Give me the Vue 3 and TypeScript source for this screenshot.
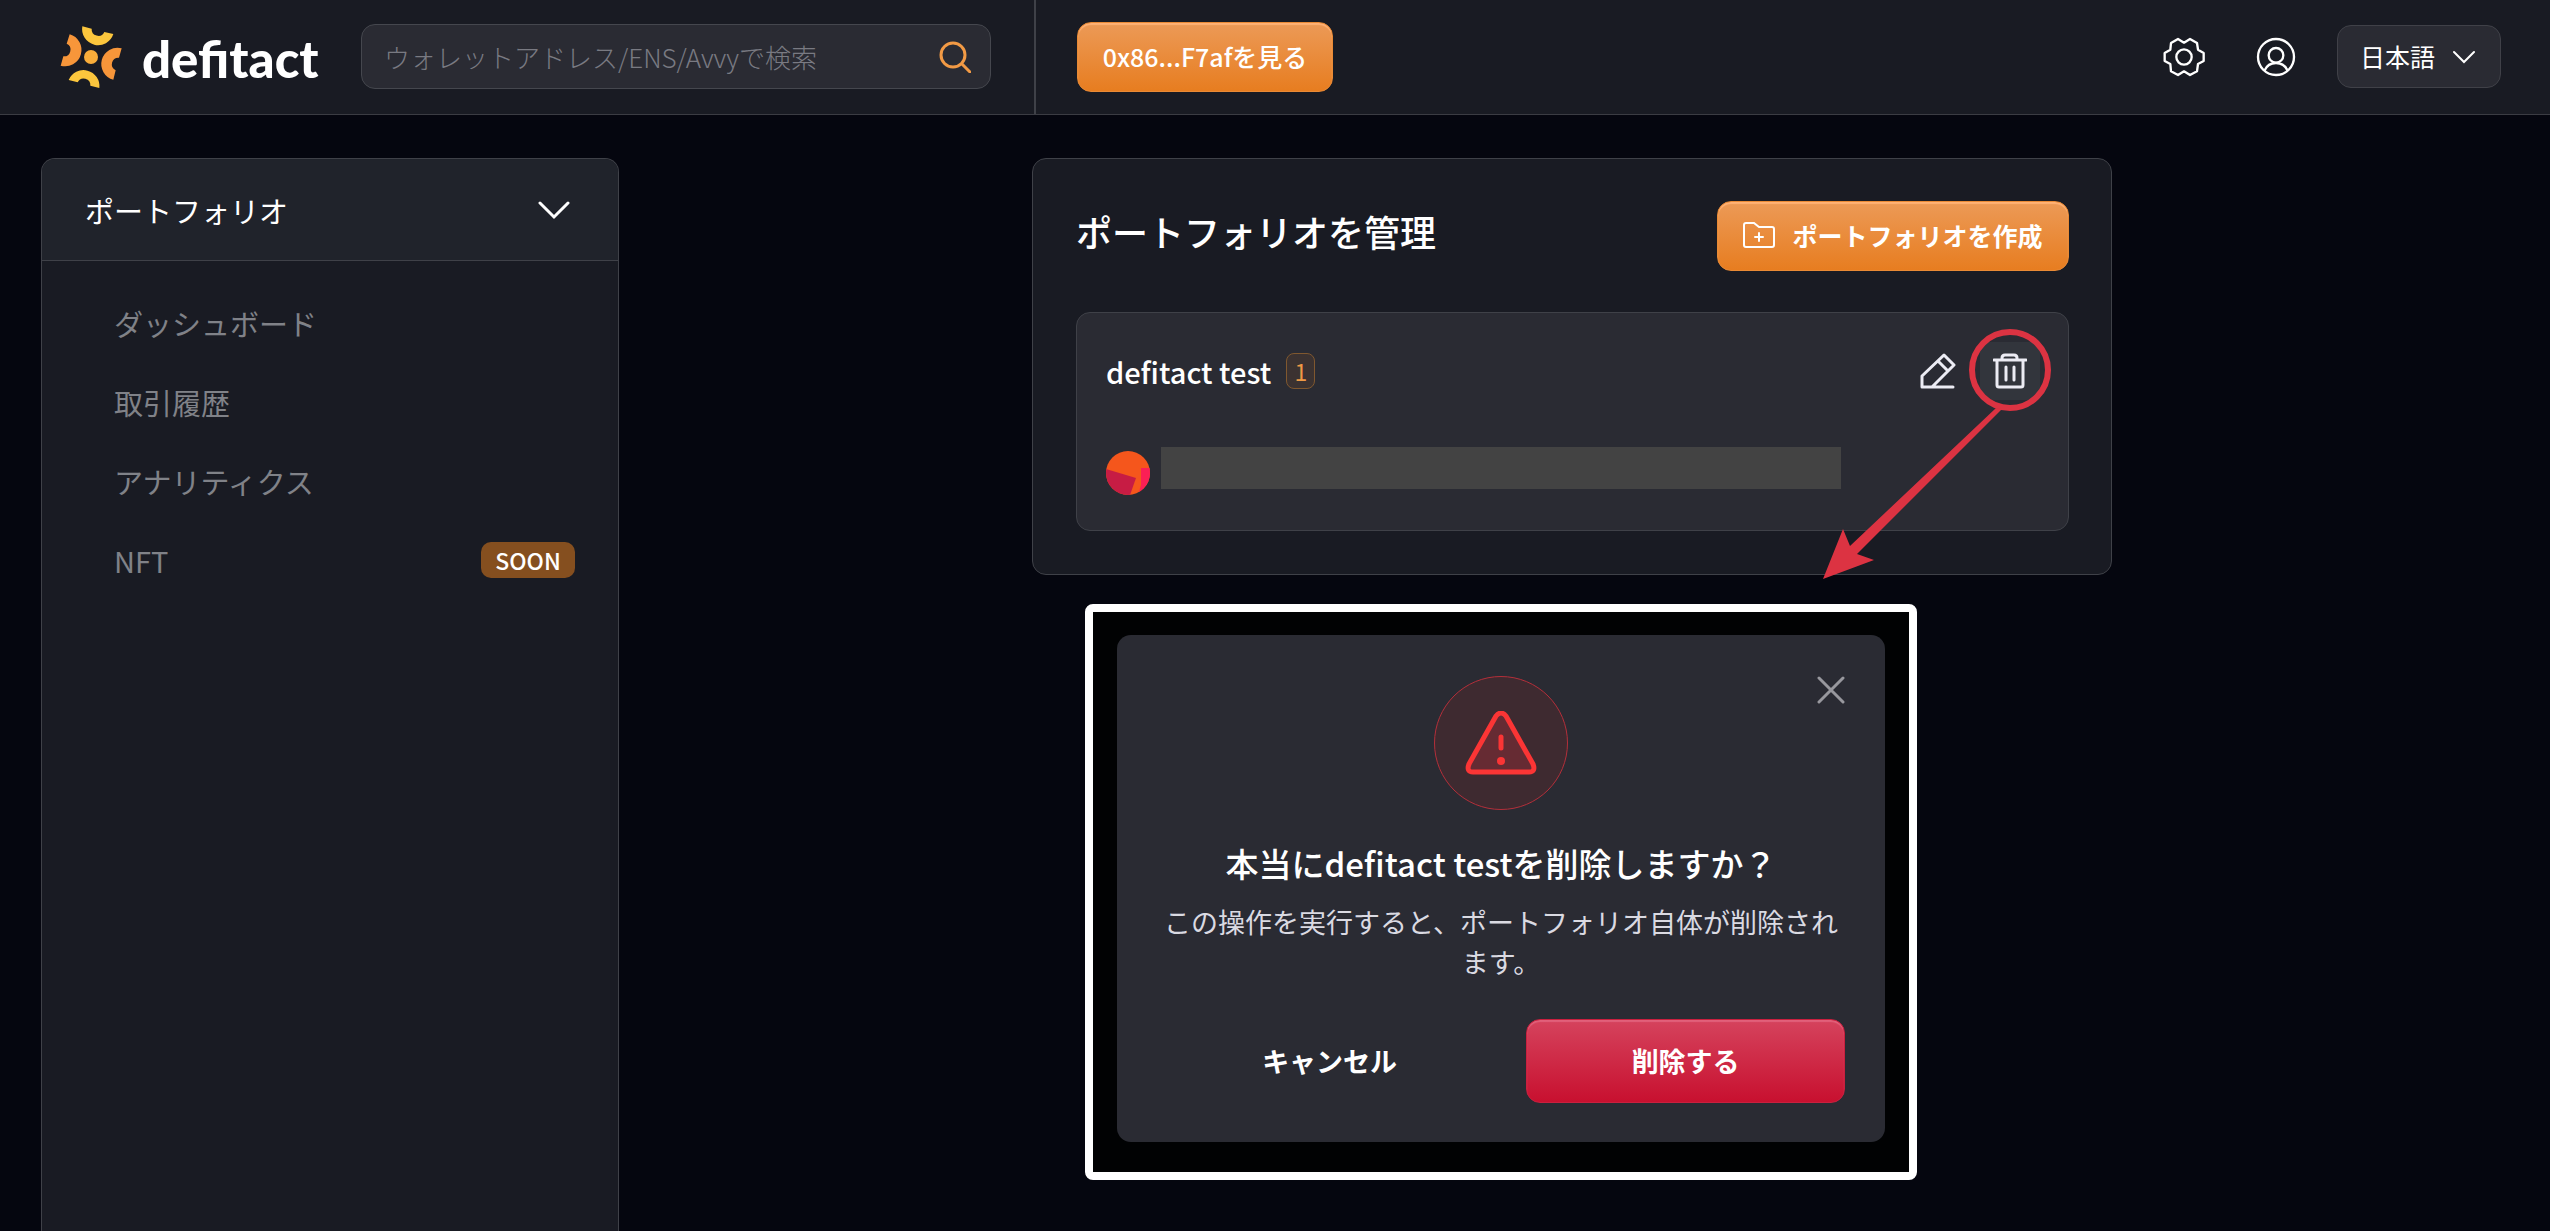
<script setup lang="ts">
import { ref } from 'vue'

interface MenuItem {
  label: string
  soon?: boolean
}

const menu: MenuItem[] = [
  { label: 'ダッシュボード' },
  { label: '取引履歴' },
  { label: 'アナリティクス' },
  { label: 'NFT', soon: true },
]

const portfolio = { name: 'defitact test', wallets: 1 }
const query = ref('')
const language = ref('ja')
</script>

<template>
  <div class="page">
    <header class="topbar">
      <div class="topbar-left">
        <a class="brand" href="#" aria-label="defitact">
          <svg class="brand-mark" viewBox="30 33 186 186" aria-hidden="true">
            <g fill="#fbc63d">
              <path d="M97 34A48 48 0 0 0 190 57L163 51A20 20 0 0 1 125 41Z" />
              <path d="M56 195A48 48 0 0 1 148 219L121 212A20 20 0 0 0 83 202Z" />
            </g>
            <g fill="#f7963a">
              <path d="M59 58A48 48 0 0 1 32 152L40 124A20 20 0 0 0 50 86Z" />
              <path d="M215 100A48 48 0 0 0 190 194L197 166A20 20 0 0 1 207 128Z" />
            </g>
            <circle cx="123" cy="126" r="21" fill="#f9ad3a" />
          </svg>
          <span class="brand-name">defitact</span>
        </a>
        <form class="search" role="search" @submit.prevent>
          <input
            v-model="query"
            type="text"
            aria-label="検索"
            placeholder="ウォレットアドレス/ENS/Avvyで検索"
          />
          <button type="submit" aria-label="検索する">
            <svg width="32" height="32" viewBox="0 0 32 32" aria-hidden="true">
              <circle cx="14" cy="14" r="12" />
              <path d="M23 23L31 31" />
            </svg>
          </button>
        </form>
      </div>
      <div class="topbar-right">
        <button class="btn btn-orange view-btn" type="button">0x86...F7afを見る</button>
        <div class="tools">
          <button class="icon-btn" type="button" aria-label="設定">
            <svg width="42" height="40" viewBox="190 109 126 120" aria-hidden="true">
              <path
                d="M253 126L271 115L292 127L295 147L312 157V181L295 190L292 212L271 223L253 212L235 223L214 212L212 190L195 181V157L212 147L214 127L235 115Z"
              />
              <circle cx="253" cy="169" r="23" />
            </svg>
          </button>
          <button class="icon-btn" type="button" aria-label="アカウント">
            <svg width="40" height="40" viewBox="469 109 120 120" aria-hidden="true">
              <circle cx="529" cy="169" r="54" />
              <circle cx="529" cy="164" r="22" />
              <path d="M494 210C501 195 513 187 529 187S557 195 564 210" />
            </svg>
          </button>
          <div class="language">
            <select v-model="language" aria-label="言語">
              <option value="ja">日本語</option>
              <option value="en">English</option>
            </select>
            <svg width="22" height="14" viewBox="0 0 22 14" aria-hidden="true">
              <path d="M1 2L11 12L21 2" />
            </svg>
          </div>
        </div>
      </div>
    </header>

    <div class="layout">
      <aside class="sidebar">
        <button class="sidebar-head" type="button" aria-expanded="true">
          <span>ポートフォリオ</span>
          <svg width="32" height="20" viewBox="0 0 32 20" aria-hidden="true">
            <path d="M2 3L16 17L30 3" />
          </svg>
        </button>
        <nav class="menu">
          <a v-for="item in menu" :key="item.label" href="#">
            <span>{{ item.label }}</span>
            <span v-if="item.soon" class="soon">SOON</span>
          </a>
        </nav>
      </aside>

      <main class="content">
        <section class="panel">
          <div class="panel-head">
            <h1>ポートフォリオを管理</h1>
            <button class="btn btn-orange create-btn" type="button">
              <svg width="32" height="26" viewBox="0 0 32 26" aria-hidden="true">
                <path d="M3 1H11L16 5H29Q31 5 31 7V23Q31 25 29 25H3Q1 25 1 23V3Q1 1 3 1Z" />
                <path d="M16 11V19M12 15H20" />
              </svg>
              <span>ポートフォリオを作成</span>
            </button>
          </div>

          <article class="card">
            <div class="card-head">
              <h2>{{ portfolio.name }}</h2>
              <span class="count">{{ portfolio.wallets }}</span>
              <div class="card-actions">
                <button type="button" aria-label="編集">
                  <svg width="36" height="36" viewBox="0 0 36 36" aria-hidden="true">
                    <path d="M2 34V23L24 2L34 12L12 34M2 34H33M18 8L28 18" />
                  </svg>
                </button>
                <button class="active" type="button" aria-label="削除">
                  <svg width="34" height="36" viewBox="0 0 34 36" aria-hidden="true">
                    <path d="M1 7H33M9 7V5Q9 2 12 2H21Q24 2 24 5V7M4 7V32Q4 34 6 34H28Q30 34 30 32V7M13 14V27M21 14V27" />
                  </svg>
                </button>
              </div>
            </div>
            <div class="wallet">
              <svg class="avatar" width="44" height="44" viewBox="0 0 44 44" aria-hidden="true">
                <clipPath id="avatar-clip"><circle cx="22" cy="22" r="22" /></clipPath>
                <g clip-path="url(#avatar-clip)">
                  <rect width="44" height="44" fill="#f5561c" />
                  <path d="M35 17H44V44H32L35 34Z" fill="#fb1f55" />
                  <path d="M0 18L30 27L24 44H0Z" fill="#c71c44" />
                </g>
              </svg>
              <div class="redacted"></div>
            </div>

            <svg class="pointer" width="234" height="254" viewBox="0 0 234 254" aria-hidden="true">
              <circle cx="190" cy="42" r="38" />
              <path d="M176 80L182 81L37 226L54 232L3 251L23 201L30 218Z" />
            </svg>
          </article>
        </section>

        <div class="preview">
          <section class="modal" role="alertdialog" aria-labelledby="modal-title" aria-describedby="modal-text">
            <button class="close" type="button" aria-label="閉じる">
              <svg width="28" height="28" viewBox="0 0 28 28" aria-hidden="true">
                <path d="M2 2L26 26M26 2L2 26" />
              </svg>
            </button>
            <div class="warning">
              <svg width="72" height="64" viewBox="0 0 72 64" aria-hidden="true">
                <path
                  d="M31 5Q36 -1 41 5L68 53Q71 61 64 61H8Q1 61 4 53Z"
                  fill="#662b33"
                  stroke="#fb3535"
                  stroke-width="5"
                  stroke-linejoin="round"
                />
                <path d="M36 26V37" stroke="#fb3535" stroke-width="5" stroke-linecap="round" />
                <circle cx="36" cy="50" r="4" fill="#fb3535" />
              </svg>
            </div>
            <h2 id="modal-title">本当に{{ portfolio.name }}を削除しますか？</h2>
            <p id="modal-text">この操作を実行すると、ポートフォリオ自体が削除されます。</p>
            <div class="modal-actions">
              <button class="btn cancel" type="button">キャンセル</button>
              <button class="btn btn-red" type="button">削除する</button>
            </div>
          </section>
        </div>
      </main>
    </div>
  </div>
</template>

<style>
body {
  margin: 0;
  background: #05060f;
}
</style>

<style scoped>
* {
  box-sizing: border-box;
}

.page {
  min-height: 100vh;
  display: flex;
  flex-direction: column;
  background: #05060f;
  color: #fff;
  font-family: "Noto Sans CJK JP", "Noto Sans", sans-serif;
  font-size: 25px;
}

button,
input,
select {
  font: inherit;
  color: inherit;
  border: 0;
  margin: 0;
  padding: 0;
  background: none;
}

button {
  cursor: pointer;
}

svg {
  display: block;
  flex: none;
  fill: none;
}

h1,
h2,
p {
  margin: 0;
}

/* top bar */
.topbar {
  display: flex;
  height: 115px;
  background: #191b23;
  border-bottom: 1px solid #3b3c43;
}

.topbar-left {
  display: flex;
  align-items: center;
  width: 1036px;
  padding: 0 43px 1px 60px;
  border-right: 2px solid #3f4148;
}

.brand {
  display: flex;
  align-items: center;
  gap: 20px;
  width: 301px;
  color: #fff;
  text-decoration: none;
}

.brand-mark {
  width: 62px;
  height: 62px;
}

.brand-name {
  padding-top: 4px;
  font: 900 51px/60px Lato, sans-serif;
}

.search {
  flex: 1;
  display: flex;
  align-items: center;
  height: 65px;
  padding: 0 19px 0 22px;
  background: #2a2b33;
  border: 1px solid #45474e;
  border-radius: 14px;
}

.search input {
  flex: 1;
  min-width: 0;
  font-size: 26px;
  font-weight: 300;
  outline: none;
}

.search input::placeholder {
  color: #797a82;
  opacity: 1;
}

.search svg {
  stroke: #f29a45;
  stroke-width: 3;
  stroke-linecap: round;
}

.topbar-right {
  flex: 1;
  display: flex;
  align-items: center;
  justify-content: space-between;
  padding: 0 49px 1px 41px;
}

.tools {
  display: flex;
  align-items: center;
}

.icon-btn {
  margin-right: 51px;
}

.icon-btn:nth-of-type(2) {
  margin-right: 41px;
}

.icon-btn svg {
  stroke: #fff;
  stroke-width: 7;
  stroke-linejoin: round;
}

.language {
  display: grid;
  align-items: center;
  width: 164px;
  height: 63px;
  background: #2a2b33;
  border: 1px solid #404148;
  border-radius: 14px;
}

.language select {
  grid-area: 1 / 1;
  width: 100%;
  height: 100%;
  padding: 0 0 2px 22px;
  appearance: none;
}

.language option {
  background: #2a2b33;
}

.language svg {
  grid-area: 1 / 1;
  justify-self: end;
  margin-right: 25px;
  stroke: #fff;
  stroke-width: 2;
  stroke-linecap: round;
  pointer-events: none;
}

/* buttons */
.btn {
  display: flex;
  align-items: center;
  justify-content: center;
  padding-bottom: 2px;
  font-weight: 700;
  border-radius: 14px;
}

.btn-orange {
  height: 70px;
  background: linear-gradient(#ec9a57, #e77d20);
  border: 1px solid #e98a35;
  box-shadow: inset 0 2px 1px #ffb275;
}

.view-btn {
  width: 256px;
  font-weight: 500;
}

/* body */
.layout {
  flex: 1;
  display: flex;
  gap: 16px;
  padding: 43px 41px 0;
}

.sidebar {
  flex: none;
  width: 578px;
  background: #191b23;
  border: 1px solid #3f4148;
  border-bottom: 0;
  border-radius: 14px 14px 0 0;
}

.sidebar-head {
  display: flex;
  align-items: center;
  justify-content: space-between;
  width: 100%;
  height: 102px;
  padding: 0 48px 0 43px;
  font-size: 29px;
  background: #20232b;
  border-bottom: 1px solid #3f4148;
  border-radius: 13px 13px 0 0;
}

.sidebar-head svg {
  stroke: #fff;
  stroke-width: 3;
  stroke-linecap: round;
}

.menu {
  padding: 22px 43px 0 72px;
}

.menu a {
  display: flex;
  align-items: center;
  justify-content: space-between;
  height: 79px;
  font-size: 29px;
  color: #808288;
  text-decoration: none;
}

.soon {
  width: 94px;
  font-size: 23px;
  font-weight: 500;
  line-height: 36px;
  text-align: center;
  color: #fff;
  background: #854f1f;
  border-radius: 10px;
}

.content {
  width: 1080px;
  margin: 0 auto;
  padding-bottom: 51px;
}

.panel {
  height: 417px;
  padding: 42px 42px 0 43px;
  background: #191b23;
  border: 1px solid #3f4148;
  border-radius: 14px;
}

.panel-head {
  display: flex;
  align-items: flex-start;
  justify-content: space-between;
}

.panel-head h1 {
  font-size: 36px;
  font-weight: 500;
  line-height: 60px;
}

.create-btn {
  gap: 17px;
  width: 352px;
}

.create-btn svg {
  stroke: #fff;
  stroke-width: 2;
  stroke-linecap: round;
}

.card {
  position: relative;
  height: 219px;
  margin-top: 41px;
  padding: 29px 28px 0 29px;
  background: #2a2b33;
  border: 1px solid #3f4148;
  border-radius: 14px;
}

.card-head {
  display: flex;
  align-items: center;
}

.card-head h2 {
  font-size: 29px;
  font-weight: 500;
  line-height: 58px;
}

.count {
  width: 29px;
  margin-left: 15px;
  font-size: 23px;
  line-height: 34px;
  text-align: center;
  color: #ef9a45;
  background: #3b3231;
  border: 1px solid #80582f;
  border-radius: 8px;
}

.card-actions {
  display: flex;
  gap: 12px;
  margin-left: auto;
}

.card-actions button {
  display: grid;
  place-items: center;
  width: 60px;
  height: 58px;
  border-radius: 8px;
}

.card-actions .active {
  background: #32353c;
}

.card-actions svg {
  stroke: #ececf4;
  stroke-width: 3;
  stroke-linecap: round;
  stroke-linejoin: round;
}

.wallet {
  display: flex;
  gap: 11px;
  margin-top: 47px;
}

.avatar {
  margin-top: 4px;
}

.redacted {
  width: 680px;
  height: 42px;
  background: #434343;
}

.pointer {
  position: absolute;
  top: 15px;
  right: 14px;
  pointer-events: none;
}

.pointer circle {
  stroke: #dc3342;
  stroke-width: 6;
}

.pointer path {
  fill: #dc3342;
}

/* confirmation dialog */
.preview {
  width: 832px;
  margin: 29px 0 0 53px;
  padding: 23px 24px 30px;
  background: #010203;
  border: 8px solid #fff;
  border-radius: 8px;
}

.modal {
  position: relative;
  padding: 41px 40px 39px;
  background: #2a2b33;
  border-radius: 14px;
  text-align: center;
}

.close {
  position: absolute;
  top: 41px;
  right: 40px;
}

.close svg {
  stroke: #98989e;
  stroke-width: 3;
  stroke-linecap: round;
}

.warning {
  display: grid;
  place-items: center;
  width: 134px;
  height: 134px;
  margin: 0 auto;
  background: #3e2a30;
  border: 1px solid #b32f3a;
  border-radius: 50%;
}

.modal h2 {
  margin-top: 28px;
  font-size: 33px;
  font-weight: 500;
  line-height: 50px;
}

.modal p {
  margin-top: 14px;
  font-size: 27px;
  font-weight: 400;
  line-height: 40px;
  color: #dadae2;
}

.modal-actions {
  display: grid;
  grid-template-columns: 13fr 12fr;
  gap: 24px;
  margin-top: 37px;
  font-size: 27px;
}

.modal-actions .btn {
  height: 84px;
}

.btn-red {
  background: linear-gradient(#d5435d, #c8102f);
  border: 1px solid #c9203f;
  box-shadow: inset 0 2px 1px #e2607a;
}
</style>
